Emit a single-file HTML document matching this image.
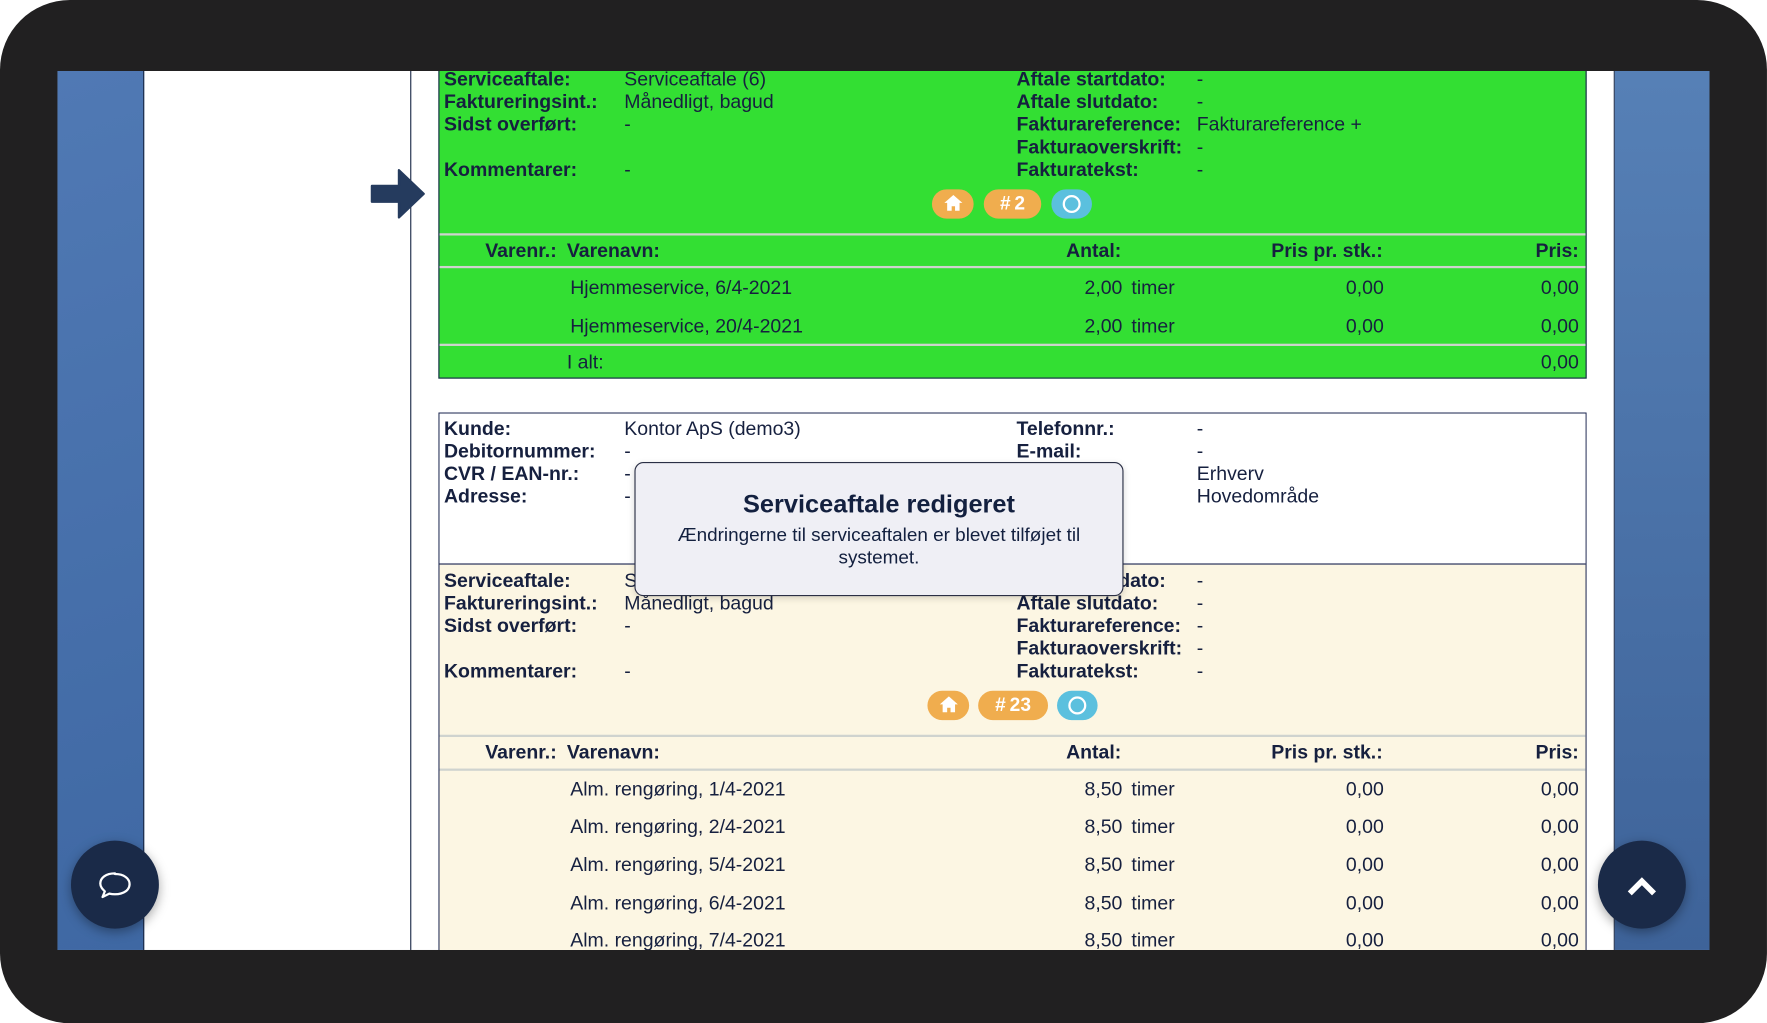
<!DOCTYPE html>
<html><head><meta charset="utf-8">
<style>
html,body{margin:0;padding:0;background:#fff;width:1767px;height:1023px;overflow:hidden}
#w{position:absolute;left:0;top:0;width:1568px;height:908px;transform:scale(1.1269);transform-origin:0 0;font-family:"Liberation Sans",Arial,sans-serif;color:#16203f;overflow:hidden}
.frame{position:absolute;left:0;top:0;width:1568px;height:908px;background:#212021;border-radius:62px}
.clip{position:absolute;left:0;top:0;width:1568px;height:908px;clip-path:inset(63px 51px 65px 51px)}
.scr{position:absolute;left:51px;top:63px;width:1466px;height:780px;overflow:hidden;background:#fff}
.a{position:absolute;white-space:nowrap;line-height:20px;font-size:17.3px}
.b{font-weight:bold}
.box{position:absolute;border:1px solid #1b2550;box-sizing:border-box}
.hl{position:absolute;height:2px;background:#cfd3cf}
.pill{position:absolute;height:26px;border-radius:13px;color:#fff;font-weight:bold;font-size:17px;line-height:26px;text-align:center}
.o{background:#f0ad4e}.bl{background:#5bc0de}
.circ{position:absolute;width:78px;height:78px;border-radius:50%;background:#1a2a48;box-shadow:0 3px 10px rgba(0,0,0,.35)}
</style></head><body><div id="w">
<div class="frame"></div>
<div class="scr">
 <div style="position:absolute;left:0;top:0;width:77px;height:780px;background:linear-gradient(160deg,#5079b4,#3f68a3)"></div>
 <div style="position:absolute;left:76px;top:0;width:1px;height:780px;background:#1b2a48"></div>
 <div style="position:absolute;left:313px;top:0;width:1px;height:780px;background:#1b2a48"></div>
 <div style="position:absolute;left:1381px;top:0;width:1px;height:780px;background:#1b2a48"></div>
 <div style="position:absolute;left:1382px;top:0;width:84px;height:780px;background:linear-gradient(180deg,#5680b6,#3e6399)"></div>
</div>
<div class="clip">
<svg style="position:absolute;left:328px;top:149px" width="52" height="46" viewBox="0 0 52 46"><path d="M2 16h24V2l22 21-22 21V30H2z" fill="#253b5e" stroke="#253b5e" stroke-width="2" stroke-linejoin="round"/></svg>

<div class="box" style="left:389px;top:40px;width:1019px;height:296px;background:#33df33"></div>
<div class="hl" style="left:390px;top:207px;width:1017px"></div>
<div class="hl" style="left:390px;top:236px;width:1017px"></div>
<div class="hl" style="left:390px;top:305px;width:1017px"></div>

<div class="a b" style="left:394px;top:60px">Serviceaftale:</div>
<div class="a b" style="left:394px;top:80px">Faktureringsint.:</div>
<div class="a b" style="left:394px;top:100px">Sidst overført:</div>
<div class="a b" style="left:394px;top:140px">Kommentarer:</div>
<div class="a" style="left:554px;top:60px">Serviceaftale (6)</div>
<div class="a" style="left:554px;top:80px">Månedligt, bagud</div>
<div class="a" style="left:554px;top:100px">-</div>
<div class="a" style="left:554px;top:140px">-</div>
<div class="a b" style="left:902px;top:60px">Aftale startdato:</div>
<div class="a b" style="left:902px;top:80px">Aftale slutdato:</div>
<div class="a b" style="left:902px;top:100px">Fakturareference:</div>
<div class="a b" style="left:902px;top:120px">Fakturaoverskrift:</div>
<div class="a b" style="left:902px;top:140px">Fakturatekst:</div>
<div class="a" style="left:1062px;top:60px">-</div>
<div class="a" style="left:1062px;top:80px">-</div>
<div class="a" style="left:1062px;top:100px">Fakturareference +</div>
<div class="a" style="left:1062px;top:120px">-</div>
<div class="a" style="left:1062px;top:140px">-</div>

<div class="pill o" style="left:827px;top:168px;width:37px"><svg width="18" height="16" viewBox="0 0 18 16" style="vertical-align:-2px"><path d="M9 1L1 8h2.5v7h4v-4h3v4h4V8H17z" fill="#fff"/></svg></div>
<div class="pill o" style="left:873px;top:168px;width:51px">#&thinsp;2</div>
<div class="pill bl" style="left:933px;top:168px;width:36px"><span style="display:inline-block;width:12px;height:12px;border:2.5px solid #fff;border-radius:50%;vertical-align:-3px"></span></div>

<div class="a b" style="right:1074px;top:212px">Varenr.:</div>
<div class="a b" style="left:503px;top:212px">Varenavn:</div>
<div class="a b" style="right:573px;top:212px">Antal:</div>
<div class="a b" style="right:341px;top:212px">Pris pr. stk.:</div>
<div class="a b" style="right:167px;top:212px">Pris:</div>

<div class="a" style="left:506px;top:245px">Hjemmeservice, 6/4-2021</div>
<div class="a" style="right:572px;top:245px">2,00</div><div class="a" style="left:1004px;top:245px">timer</div>
<div class="a" style="right:340px;top:245px">0,00</div><div class="a" style="right:167px;top:245px">0,00</div>
<div class="a" style="left:506px;top:279px">Hjemmeservice, 20/4-2021</div>
<div class="a" style="right:572px;top:279px">2,00</div><div class="a" style="left:1004px;top:279px">timer</div>
<div class="a" style="right:340px;top:279px">0,00</div><div class="a" style="right:167px;top:279px">0,00</div>
<div class="a" style="left:503px;top:311px">I alt:</div>
<div class="a" style="right:167px;top:311px">0,00</div>

<div style="position:absolute;left:389px;top:366px;width:1019px;height:477px;overflow:hidden">
 <div style="position:absolute;left:0;top:0;width:1019px;height:600px;border:1px solid #1b2550;box-sizing:border-box;background:#fcf6e3"></div>
 <div style="position:absolute;left:1px;top:1px;width:1017px;height:133px;background:#fff;border-bottom:1px solid #1b2550"></div>
</div>
<div class="hl" style="left:390px;top:652px;width:1017px"></div>
<div class="hl" style="left:390px;top:682px;width:1017px"></div>

<div class="a b" style="left:394px;top:370px">Kunde:</div>
<div class="a b" style="left:394px;top:390px">Debitornummer:</div>
<div class="a b" style="left:394px;top:410px">CVR / EAN-nr.:</div>
<div class="a b" style="left:394px;top:430px">Adresse:</div>
<div class="a" style="left:554px;top:370px">Kontor ApS (demo3)</div>
<div class="a" style="left:554px;top:390px">-</div>
<div class="a" style="left:554px;top:410px">-</div>
<div class="a" style="left:554px;top:430px">-</div>
<div class="a b" style="left:902px;top:370px">Telefonnr.:</div>
<div class="a b" style="left:902px;top:390px">E-mail:</div>
<div class="a" style="left:1062px;top:370px">-</div>
<div class="a" style="left:1062px;top:390px">-</div>
<div class="a" style="left:1062px;top:410px">Erhverv</div>
<div class="a" style="left:1062px;top:430px">Hovedområde</div>

<div class="a b" style="left:394px;top:505px">Serviceaftale:</div>
<div class="a b" style="left:394px;top:525px">Faktureringsint.:</div>
<div class="a b" style="left:394px;top:545px">Sidst overført:</div>
<div class="a b" style="left:394px;top:585px">Kommentarer:</div>
<div class="a" style="left:554px;top:505px">Serviceaftale (23)</div>
<div class="a" style="left:554px;top:525px">Månedligt, bagud</div>
<div class="a" style="left:554px;top:545px">-</div>
<div class="a" style="left:554px;top:585px">-</div>
<div class="a b" style="left:902px;top:505px">Aftale startdato:</div>
<div class="a b" style="left:902px;top:525px">Aftale slutdato:</div>
<div class="a b" style="left:902px;top:545px">Fakturareference:</div>
<div class="a b" style="left:902px;top:565px">Fakturaoverskrift:</div>
<div class="a b" style="left:902px;top:585px">Fakturatekst:</div>
<div class="a" style="left:1062px;top:505px">-</div>
<div class="a" style="left:1062px;top:525px">-</div>
<div class="a" style="left:1062px;top:545px">-</div>
<div class="a" style="left:1062px;top:565px">-</div>
<div class="a" style="left:1062px;top:585px">-</div>

<div class="pill o" style="left:823px;top:613px;width:37px"><svg width="18" height="16" viewBox="0 0 18 16" style="vertical-align:-2px"><path d="M9 1L1 8h2.5v7h4v-4h3v4h4V8H17z" fill="#fff"/></svg></div>
<div class="pill o" style="left:868px;top:613px;width:62px">#&thinsp;23</div>
<div class="pill bl" style="left:938px;top:613px;width:36px"><span style="display:inline-block;width:12px;height:12px;border:2.5px solid #fff;border-radius:50%;vertical-align:-3px"></span></div>

<div class="a b" style="right:1074px;top:657px">Varenr.:</div>
<div class="a b" style="left:503px;top:657px">Varenavn:</div>
<div class="a b" style="right:573px;top:657px">Antal:</div>
<div class="a b" style="right:341px;top:657px">Pris pr. stk.:</div>
<div class="a b" style="right:167px;top:657px">Pris:</div>

<div class="a" style="left:506px;top:690px">Alm. rengøring, 1/4-2021</div><div class="a" style="right:572px;top:690px">8,50</div><div class="a" style="left:1004px;top:690px">timer</div><div class="a" style="right:340px;top:690px">0,00</div><div class="a" style="right:167px;top:690px">0,00</div>
<div class="a" style="left:506px;top:723px">Alm. rengøring, 2/4-2021</div><div class="a" style="right:572px;top:723px">8,50</div><div class="a" style="left:1004px;top:723px">timer</div><div class="a" style="right:340px;top:723px">0,00</div><div class="a" style="right:167px;top:723px">0,00</div>
<div class="a" style="left:506px;top:757px">Alm. rengøring, 5/4-2021</div><div class="a" style="right:572px;top:757px">8,50</div><div class="a" style="left:1004px;top:757px">timer</div><div class="a" style="right:340px;top:757px">0,00</div><div class="a" style="right:167px;top:757px">0,00</div>
<div class="a" style="left:506px;top:791px">Alm. rengøring, 6/4-2021</div><div class="a" style="right:572px;top:791px">8,50</div><div class="a" style="left:1004px;top:791px">timer</div><div class="a" style="right:340px;top:791px">0,00</div><div class="a" style="right:167px;top:791px">0,00</div>
<div class="a" style="left:506px;top:824px">Alm. rengøring, 7/4-2021</div><div class="a" style="right:572px;top:824px">8,50</div><div class="a" style="left:1004px;top:824px">timer</div><div class="a" style="right:340px;top:824px">0,00</div><div class="a" style="right:167px;top:824px">0,00</div>

<div style="position:absolute;left:563px;top:410px;width:434px;height:119px;box-sizing:border-box;background:#efeff5;border:1px solid #2a2f45;border-radius:8px;text-align:center;box-shadow:0 2px 6px rgba(0,0,0,.15)">
 <div style="margin-top:24px;font-size:22.5px;font-weight:bold;line-height:26px;color:#13203f">Serviceaftale redigeret</div>
 <div style="margin-top:4px;font-size:16.8px;line-height:20px;color:#13203f">Ændringerne til serviceaftalen er blevet tilføjet til<br>systemet.</div>
</div>

<div class="circ" style="left:63px;top:746px"><svg width="78" height="78" viewBox="0 0 78 78"><path d="M39 29c-8 0-13 4-13 9 0 3 2 5 4 7l-2 5 6-3c2 .5 3 .6 5 .6 8 0 13-4 13-9s-5-9-13-9z" fill="none" stroke="#fff" stroke-width="2" stroke-linejoin="round"/></svg></div>
<div class="circ" style="left:1418px;top:746px"><svg width="78" height="78" viewBox="0 0 78 78"><path d="M30 45l9-9 9 9" fill="none" stroke="#fff" stroke-width="5" stroke-linecap="square"/></svg></div>
</div>
</div></body></html>
